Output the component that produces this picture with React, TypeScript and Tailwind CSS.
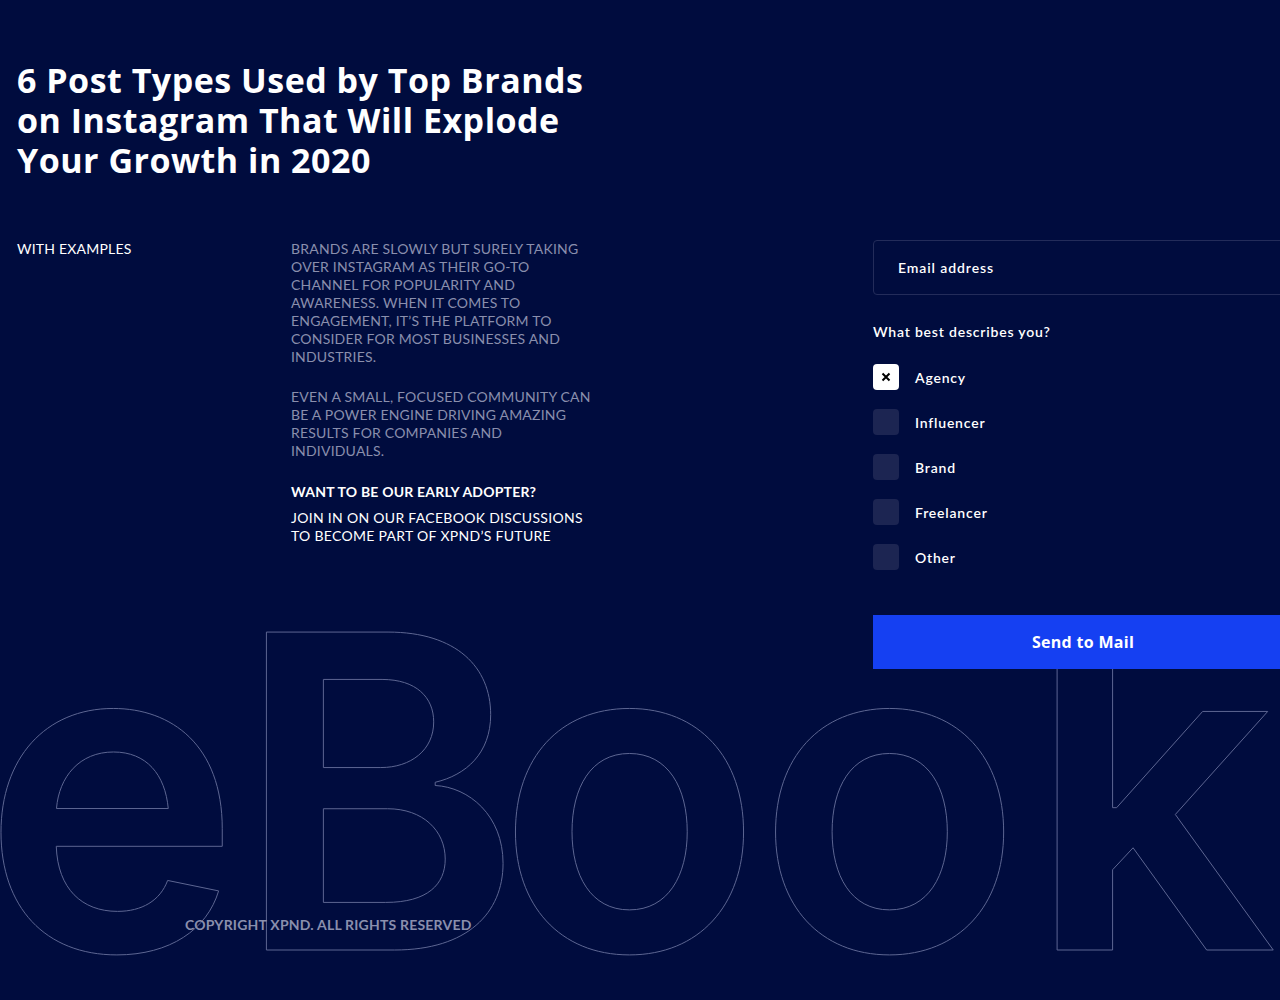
import { useState } from "react";

const roles = ["Agency", "Influencer", "Brand", "Freelancer", "Other"];

function RoleOption({
  label,
  checked,
  onToggle,
}: {
  label: string;
  checked: boolean;
  onToggle: () => void;
}) {
  return (
    <button
      type="button"
      onClick={onToggle}
      className="flex h-[26px] items-center gap-4 text-left"
    >
      <span
        className={
          checked
            ? "flex h-[26px] w-[26px] items-center justify-center rounded-[4px] bg-white"
            : "flex h-[26px] w-[26px] items-center justify-center rounded-[4px] bg-[#1c2552]"
        }
      >
        {checked ? (
          <svg width="10" height="10" viewBox="0 0 10 10">
            <path d="M1.5 1.5l7 7M8.5 1.5l-7 7" stroke="#000" strokeWidth="2" />
          </svg>
        ) : null}
      </span>
      <span className="text-[14px] font-semibold tracking-[0.8px] text-white">{label}</span>
    </button>
  );
}

export default function App() {
  const [selected, setSelected] = useState<string[]>(["Agency"]);

  const toggle = (role: string) =>
    setSelected((prev) =>
      prev.includes(role) ? prev.filter((r) => r !== role) : [...prev, role],
    );

  return (
    <div className="relative h-[1000px] w-full overflow-hidden bg-[#000c3e] font-['Lato',sans-serif] text-white">
      {/* outlined background word */}
      <div
        aria-hidden
        className="pointer-events-none absolute left-[-18px] top-[573px] select-none whitespace-nowrap font-['Inter',sans-serif] text-[437px] font-semibold leading-none tracking-[-6px] text-transparent [-webkit-text-stroke:1px_#5d6692]"
      >
        e<span className="tracking-[-26px]">B</span>
        <span className="tracking-[-6px]">o</span>
        <span className="tracking-[5px]">o</span>k
      </div>

      <div className="relative px-[17px] pt-[60px]">
        <h1 className="whitespace-nowrap font-['Open_Sans',sans-serif] text-[34px] font-bold leading-[40px] tracking-[0.5px]">
          6 Post Types Used by Top Brands
          <br />
          on Instagram That Will Explode
          <br />
          Your Growth in 2020
        </h1>

        <div className="mt-[60px] flex">
          <p className="w-[274px] shrink-0 text-[14px] leading-[18px] tracking-[0.2px]">
            WITH EXAMPLES
          </p>

          <div className="w-[310px] shrink-0 whitespace-nowrap text-[14px] uppercase leading-[18px] tracking-[0.2px]">
            <p className="text-[#8a8fad]">
              Brands are slowly but surely taking
              <br />
              over Instagram as their go-to
              <br />
              channel for popularity and
              <br />
              awareness. When it comes to
              <br />
              engagement, it’s the platform to
              <br />
              consider for most businesses and
              <br />
              industries.
            </p>
            <p className="mt-[22px] text-[#8a8fad]">
              Even a small, focused community can
              <br />
              be a power engine driving amazing
              <br />
              results for companies and
              <br />
              individuals.
            </p>
            <p className="mt-[23px] font-bold tracking-[0.2px]">Want to be our early adopter?</p>
            <p className="mt-[8px] tracking-[0.3px]">
              Join in on our Facebook discussions
              <br />
              to become part of XPND’s future
            </p>
          </div>

          <form
            className="ml-[272px] flex w-[420px] shrink-0 flex-col"
            onSubmit={(e) => e.preventDefault()}
          >
            <input
              type="email"
              placeholder="Email address"
              className="h-[55px] rounded-[4px] border border-[#232c5a] bg-transparent px-[24px] text-[14px] font-semibold tracking-[0.9px] text-white outline-none placeholder:text-white"
            />
            <p className="mt-[28px] text-[14px] font-semibold leading-[18px] tracking-[0.8px]">
              What best describes you?
            </p>
            <div className="mt-[23px] flex flex-col gap-[19px]">
              {roles.map((role) => (
                <RoleOption
                  key={role}
                  label={role}
                  checked={selected.includes(role)}
                  onToggle={() => toggle(role)}
                />
              ))}
            </div>
            <button
              type="submit"
              className="mt-[45px] h-[54px] bg-[#1540f2] font-['Open_Sans',sans-serif] text-[16px] font-bold tracking-[0.3px] text-white"
            >
              Send to Mail
            </button>
          </form>
        </div>
      </div>

      <p className="absolute left-[185px] top-[916px] text-[14px] font-bold leading-[18px] tracking-[0.2px] text-[#8a8fad]">
        COPYRIGHT XPND. ALL RIGHTS RESERVED
      </p>
    </div>
  );
}
